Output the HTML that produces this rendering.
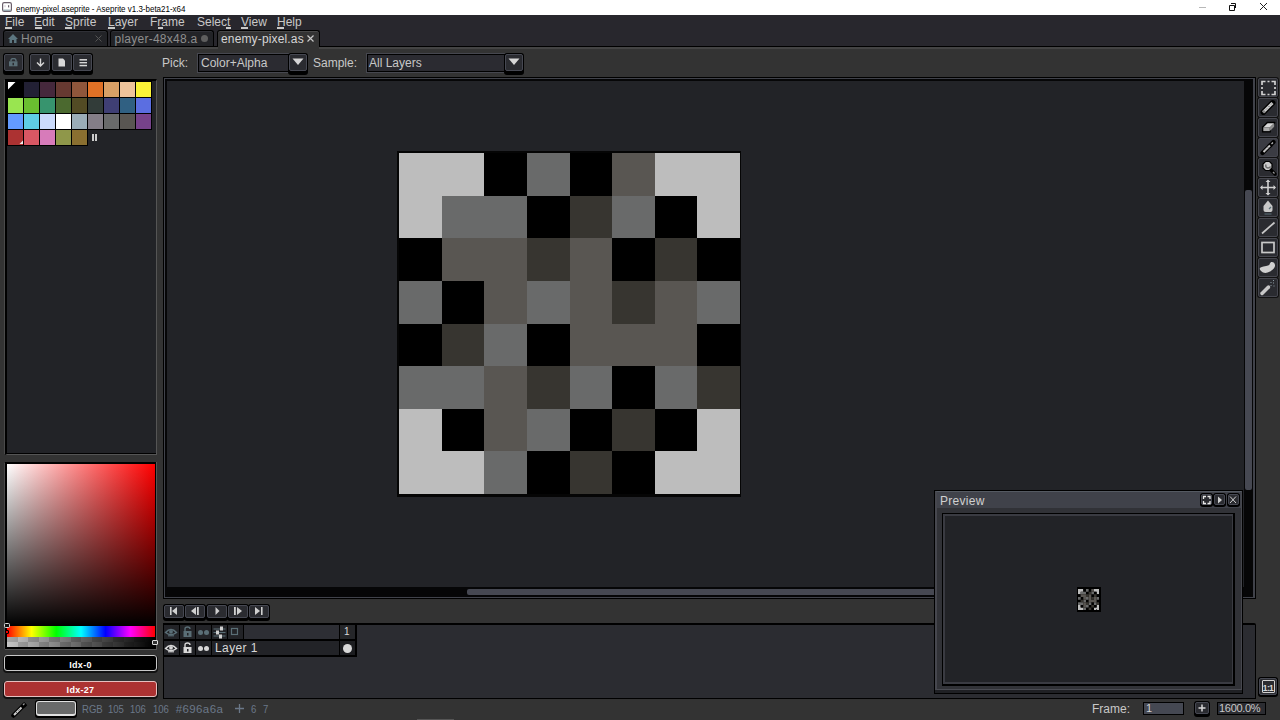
<!DOCTYPE html>
<html><head><meta charset="utf-8"><style>
*{margin:0;padding:0;box-sizing:border-box}
html,body{width:1280px;height:720px;overflow:hidden;background:#333333;font-family:"Liberation Sans",sans-serif;position:relative}
div,span,svg{position:absolute}
.t{white-space:nowrap;font-size:12px;line-height:14px}
.menu{color:#c8c8c8}
.bt{background:#2a2b30;border:1px solid #464852;border-radius:2px;box-shadow:0 0 0 1px #000,0 3px 0 1px #000}
.ic{fill:#d6d6d6}
.ib{fill:#5a6e76}
.sb{color:#6b7889;font-size:11.5px;transform-origin:0 0}

</style></head><body>
<!-- title bar -->
<div style="left:0;top:0;width:1280px;height:15px;background:#fff"></div>
<svg style="left:2px;top:2px" width="10" height="10" viewBox="0 0 10 10"><rect x="0.6" y="0.6" width="8.8" height="8.8" rx="1.6" fill="#fff" stroke="#6b5f6b" stroke-width="1.2"/><rect x="1.2" y="7.6" width="7.6" height="1.2" fill="#8aa0a8"/><rect x="2.4" y="3.2" width="1.2" height="2" fill="#d8d0d8"/><rect x="6" y="3.2" width="1.2" height="2.2" fill="#6b5f6b"/></svg>
<div class="t" style="left:15.5px;top:1.5px;font-size:9.5px;line-height:13px;color:#1a1a1a;transform:scaleX(0.84);transform-origin:0 0;color:#000">enemy-pixel.aseprite - Aseprite v1.3-beta21-x64</div>
<svg style="left:1196px;top:0" width="84" height="15" viewBox="0 0 84 15"><rect x="3" y="7" width="7" height="1" fill="#b8b8b8"/><path d="M33.5 5.5h5v5h-5z" fill="none" stroke="#111" stroke-width="1"/><path d="M35 3.5h4.5v4.5" fill="none" stroke="#111" stroke-width="1"/><path d="M64 3l7 7M71 3l-7 7" stroke="#222" stroke-width="1"/></svg>
<!-- menu + tab bar -->
<div style="left:0;top:15px;width:1280px;height:31px;background:#28272d"></div>
<div class="t menu" style="left:5px;top:15px">File</div><div style="left:5px;top:27px;width:7px;height:1.5px;background:#c8c8c8"></div>
<div class="t menu" style="left:34px;top:15px">Edit</div><div style="left:35px;top:27px;width:7px;height:1.5px;background:#c8c8c8"></div>
<div class="t menu" style="left:65px;top:15px">Sprite</div><div style="left:65px;top:27px;width:7px;height:1.5px;background:#c8c8c8"></div>
<div class="t menu" style="left:108px;top:15px">Layer</div><div style="left:108px;top:27px;width:7px;height:1.5px;background:#c8c8c8"></div>
<div class="t menu" style="left:150px;top:15px">Frame</div><div style="left:158px;top:27px;width:5px;height:1.5px;background:#c8c8c8"></div>
<div class="t menu" style="left:197px;top:15px">Select</div><div style="left:226px;top:27px;width:5px;height:1.5px;background:#c8c8c8"></div>
<div class="t menu" style="left:241px;top:15px">View</div><div style="left:241px;top:27px;width:7px;height:1.5px;background:#c8c8c8"></div>
<div class="t menu" style="left:277px;top:15px">Help</div><div style="left:277px;top:27px;width:7px;height:1.5px;background:#c8c8c8"></div>
<!-- tabs -->
<div style="left:3px;top:30px;width:105px;height:17px;background:#222327;border:1px solid #000;border-bottom:none;border-radius:3px 3px 0 0;box-shadow:inset 0 1px 0 #2f3036"></div>
<svg style="left:8px;top:34px" width="10" height="9" viewBox="0 0 10 9"><path d="M5 0L0 5h1.5v4h2.5v-3h2v3h2.5v-4h1.5z" fill="#5c7680"/></svg>
<div class="t" style="left:21px;top:32px;color:#8e8e8e">Home</div>
<svg style="left:95px;top:35px" width="7" height="7" viewBox="0 0 7 7"><path d="M0.5 0.5l6 6M6.5 0.5l-6 6" stroke="#555" stroke-width="1"/></svg>
<div style="left:110px;top:30px;width:104px;height:17px;background:#222327;border:1px solid #000;border-bottom:none;border-radius:3px 3px 0 0;box-shadow:inset 0 1px 0 #2f3036"></div>
<div class="t" style="left:114.5px;top:32px;color:#8e8e8e;letter-spacing:0.25px">player-48x48.a</div>
<div style="left:201px;top:35px;width:7px;height:7px;border-radius:50%;background:#5e5e5e"></div>
<div style="left:217px;top:30px;width:103px;height:18px;background:#333;border:1px solid #000;border-bottom:none;border-radius:3px 3px 0 0;box-shadow:inset 0 1px 0 #484848"></div>
<div class="t" style="left:221px;top:32px;color:#d6d6d6;letter-spacing:0.15px">enemy-pixel.as</div>
<svg style="left:307px;top:35px" width="7" height="7" viewBox="0 0 7 7"><path d="M0.5 0.5l6 6M6.5 0.5l-6 6" stroke="#c8c8c8" stroke-width="1.2"/></svg>
<div style="left:0;top:46px;width:218px;height:1px;background:#000"></div>
<div style="left:319px;top:46px;width:961px;height:1px;background:#000"></div>
<!-- toolbar -->
<div style="left:0;top:47px;width:1280px;height:30px;background:#333"></div>
<div style="left:0;top:47px;width:218px;height:1.5px;background:#444"></div>
<div style="left:319px;top:47px;width:961px;height:1.5px;background:#444"></div>
<div class="bt" style="left:4px;top:54px;width:19px;height:17px"></div>
<svg style="left:9px;top:58px" width="9" height="9" viewBox="0 0 9 9"><path d="M2 3.5V2.5Q2 0.5 4.5 0.5T7 2.5V3.5" fill="none" stroke="#5a6e76" stroke-width="1.4"/><rect x="0" y="3.3" width="8.5" height="5" fill="#5a6e76"/><rect x="3.5" y="4.8" width="1.5" height="2.5" fill="#2a2b30"/></svg>
<div class="bt" style="left:30px;top:54px;width:20px;height:17px"></div>
<div class="bt" style="left:52px;top:54px;width:20px;height:17px"></div>
<div class="bt" style="left:73px;top:54px;width:19px;height:17px"></div>
<svg style="left:36px;top:58px" width="9" height="9" viewBox="0 0 9 9"><path d="M4.5 0.5v7.5M1 4.5l3.5 3.5 3.5-3.5" fill="none" stroke="#d6d6d6" stroke-width="1.4"/></svg>
<svg style="left:58px;top:58px" width="8" height="9" viewBox="0 0 8 9"><path d="M0.5 0.5h4.5l2 2v6h-6.5z" fill="#d8d8d8"/></svg>
<svg style="left:79px;top:58px" width="9" height="9" viewBox="0 0 9 9"><rect x="0.5" y="1" width="7.5" height="1.6" fill="#cfcfcf"/><rect x="0.5" y="4" width="7.5" height="1.4" fill="#d8d8d8"/><rect x="0.5" y="6.8" width="7.5" height="1.5" fill="#d8d8d8"/></svg>
<div class="t" style="left:162px;top:56px;color:#c8c8c8">Pick:</div>
<div style="left:198px;top:54px;width:91px;height:18px;background:#2b2b31;border:1px solid #000;box-shadow:0 0 0 1px #46474f"></div>
<div class="t" style="left:201px;top:56px;color:#c8c8c8">Color+Alpha</div>
<div class="bt" style="left:289px;top:54px;width:18px;height:17px"></div>
<svg style="left:292px;top:58px" width="12" height="8" viewBox="0 0 12 8"><path d="M0.5 0.5h11l-5.5 6.5z" fill="#d6d6d6"/></svg>
<div class="t" style="left:313px;top:56px;color:#c8c8c8">Sample:</div>
<div style="left:367px;top:54px;width:138px;height:18px;background:#2b2b31;border:1px solid #000;box-shadow:0 0 0 1px #46474f"></div>
<div class="t" style="left:369px;top:56px;color:#c8c8c8">All Layers</div>
<div class="bt" style="left:505px;top:54px;width:18px;height:17px"></div>
<svg style="left:508px;top:58px" width="12" height="8" viewBox="0 0 12 8"><path d="M0.5 0.5h11l-5.5 6.5z" fill="#d6d6d6"/></svg>
<!-- left palette panel -->
<div style="left:4px;top:80px;width:1px;height:374px;background:#4a4a4a"></div>
<div style="left:4px;top:463px;width:1px;height:186px;background:#4a4a4a"></div>
<div style="left:5px;top:79px;width:152px;height:376px;background:#222327;border-top:2px solid #000;border-left:2px solid #000;border-right:1px solid #555;border-bottom:1px solid #555;box-shadow:inset 0 -1px 0 #000"></div>
<div style="left:7px;top:81px;width:145px;height:49px;background:#000"></div>
<div style="left:7px;top:129px;width:81px;height:17px;background:#000"></div>
<div style="left:8px;top:82px;width:15px;height:15px;background:#000000"></div>
<div style="left:24px;top:82px;width:15px;height:15px;background:#222034"></div>
<div style="left:40px;top:82px;width:15px;height:15px;background:#45283c"></div>
<div style="left:56px;top:82px;width:15px;height:15px;background:#663931"></div>
<div style="left:72px;top:82px;width:15px;height:15px;background:#8f563b"></div>
<div style="left:88px;top:82px;width:15px;height:15px;background:#df7126"></div>
<div style="left:104px;top:82px;width:15px;height:15px;background:#d9a066"></div>
<div style="left:120px;top:82px;width:15px;height:15px;background:#eec39a"></div>
<div style="left:136px;top:82px;width:15px;height:15px;background:#fbf236"></div>
<div style="left:8px;top:98px;width:15px;height:15px;background:#99e550"></div>
<div style="left:24px;top:98px;width:15px;height:15px;background:#6abe30"></div>
<div style="left:40px;top:98px;width:15px;height:15px;background:#37946e"></div>
<div style="left:56px;top:98px;width:15px;height:15px;background:#4b692f"></div>
<div style="left:72px;top:98px;width:15px;height:15px;background:#524b24"></div>
<div style="left:88px;top:98px;width:15px;height:15px;background:#323c39"></div>
<div style="left:104px;top:98px;width:15px;height:15px;background:#3f3f74"></div>
<div style="left:120px;top:98px;width:15px;height:15px;background:#306082"></div>
<div style="left:136px;top:98px;width:15px;height:15px;background:#5b6ee1"></div>
<div style="left:8px;top:114px;width:15px;height:15px;background:#639bff"></div>
<div style="left:24px;top:114px;width:15px;height:15px;background:#5fcde4"></div>
<div style="left:40px;top:114px;width:15px;height:15px;background:#cbdbfc"></div>
<div style="left:56px;top:114px;width:15px;height:15px;background:#ffffff"></div>
<div style="left:72px;top:114px;width:15px;height:15px;background:#9badb7"></div>
<div style="left:88px;top:114px;width:15px;height:15px;background:#847e87"></div>
<div style="left:104px;top:114px;width:15px;height:15px;background:#696a6a"></div>
<div style="left:120px;top:114px;width:15px;height:15px;background:#595652"></div>
<div style="left:136px;top:114px;width:15px;height:15px;background:#76428a"></div>
<div style="left:8px;top:130px;width:15px;height:15px;background:#ac3232"></div>
<div style="left:24px;top:130px;width:15px;height:15px;background:#d95763"></div>
<div style="left:40px;top:130px;width:15px;height:15px;background:#d77bba"></div>
<div style="left:56px;top:130px;width:15px;height:15px;background:#8f974a"></div>
<div style="left:72px;top:130px;width:15px;height:15px;background:#8a6f30"></div>
<svg style="left:8px;top:82px" width="8" height="8" viewBox="0 0 8 8"><path d="M0 0h7.5L0 7.5z" fill="#fff"/></svg>
<svg style="left:19px;top:140px" width="5" height="5" viewBox="0 0 5 5"><path d="M4 0.5V4H0.5z" fill="#eee"/></svg>
<div style="left:92px;top:134px;width:1.5px;height:7px;background:#ccc"></div>
<div style="left:95px;top:134px;width:1.5px;height:7px;background:#ccc"></div>
<!-- color gradient -->
<div style="left:5px;top:462px;width:152px;height:188px;background:#000;border-right:1px solid #555;border-bottom:1px solid #555"></div>
<div style="left:7px;top:464px;width:148px;height:162px;background:linear-gradient(to bottom, rgba(0,0,0,0), #000), linear-gradient(to right, #fff, #f00)"></div>
<div style="left:7px;top:626px;width:148px;height:11px;background:linear-gradient(to right,#f00,#ff0 16.6%,#0f0 33.3%,#0ff 50%,#00f 66.6%,#f0f 83.3%,#f00)"></div>
<div style="left:7px;top:637px;width:148px;height:10px;background:linear-gradient(to right,rgba(0,0,0,0),#000),repeating-linear-gradient(to right,#c6c6c6 0 10.6px,#a8a8a8 10.6px 21.2px)"></div>
<div style="left:7px;top:637px;width:148px;height:5px;background:linear-gradient(to right,rgba(0,0,0,0),#000),repeating-linear-gradient(to right,#a8a8a8 0 10.6px,#c6c6c6 10.6px 21.2px)"></div>
<div style="left:4px;top:623px;width:5.5px;height:5px;border:1px solid #ddd;background:#111;border-radius:1.5px"></div>
<div style="left:5px;top:629.5px;width:4px;height:4px;border:1px solid #000;background:#e00;border-radius:1px"></div>
<div style="left:152px;top:640px;width:6px;height:5px;border:1px solid #ddd;background:#333;border-radius:1px"></div>
<div style="left:4px;top:655px;width:153px;height:16px;background:#000;border:1.6px solid #c8c8c8;border-radius:3px;box-shadow:0 1px 0 1px #111"></div>
<div class="t" style="left:4px;top:657.5px;width:153px;text-align:center;color:#fff;font-size:9px;font-weight:bold;letter-spacing:0.3px">Idx-0</div>
<div style="left:4px;top:681px;width:153px;height:16px;background:#ac3232;border:1.6px solid #e6c0c0;border-radius:3px;box-shadow:0 1px 0 1px #111"></div>
<div class="t" style="left:4px;top:682.5px;width:153px;text-align:center;color:#fff;font-size:9px;font-weight:bold;letter-spacing:0.3px">Idx-27</div>
<!-- canvas -->
<div style="left:163px;top:77px;width:1093px;height:522px;background:#000"></div>
<div style="left:164px;top:78px;width:1091px;height:520px;background:#40424a"></div>
<div style="left:165px;top:79px;width:1088px;height:518px;background:#060607"></div>
<div style="left:167px;top:81px;width:1077px;height:506px;background:#222327"></div>
<div style="left:1245px;top:190px;width:7px;height:300px;background:#464852;border-radius:2px"></div>
<div style="left:467px;top:589px;width:470px;height:6px;background:#464852;border-radius:2px"></div>
<div style="left:397px;top:151px;width:344px;height:346px;background:#050505"></div>
<svg style="left:399px;top:153px" width="341.000" height="341.000" viewBox="0 0 8 8" shape-rendering="crispEdges"><path d="M0 0h1v1h-1zM1 0h1v1h-1zM6 0h1v1h-1zM7 0h1v1h-1zM0 1h1v1h-1zM7 1h1v1h-1zM0 6h1v1h-1zM7 6h1v1h-1zM0 7h1v1h-1zM1 7h1v1h-1zM6 7h1v1h-1zM7 7h1v1h-1z" fill="#bdbdbd"/><path d="M2 0h1v1h-1zM4 0h1v1h-1zM3 1h1v1h-1zM6 1h1v1h-1zM0 2h1v1h-1zM5 2h1v1h-1zM7 2h1v1h-1zM1 3h1v1h-1zM0 4h1v1h-1zM3 4h1v1h-1zM7 4h1v1h-1zM5 5h1v1h-1zM1 6h1v1h-1zM4 6h1v1h-1zM6 6h1v1h-1zM3 7h1v1h-1zM5 7h1v1h-1z" fill="#000000"/><path d="M3 0h1v1h-1zM1 1h1v1h-1zM2 1h1v1h-1zM5 1h1v1h-1zM0 3h1v1h-1zM3 3h1v1h-1zM7 3h1v1h-1zM2 4h1v1h-1zM0 5h1v1h-1zM1 5h1v1h-1zM4 5h1v1h-1zM6 5h1v1h-1zM3 6h1v1h-1zM2 7h1v1h-1z" fill="#696a6a"/><path d="M5 0h1v1h-1zM1 2h1v1h-1zM2 2h1v1h-1zM4 2h1v1h-1zM2 3h1v1h-1zM4 3h1v1h-1zM6 3h1v1h-1zM4 4h1v1h-1zM5 4h1v1h-1zM6 4h1v1h-1zM2 5h1v1h-1zM2 6h1v1h-1z" fill="#595652"/><path d="M4 1h1v1h-1zM3 2h1v1h-1zM6 2h1v1h-1zM5 3h1v1h-1zM1 4h1v1h-1zM3 5h1v1h-1zM7 5h1v1h-1zM5 6h1v1h-1zM4 7h1v1h-1z" fill="#373530"/></svg>
<!-- right tools -->
<div style="left:1258px;top:78px;width:20px;height:19px;background:#2a2b30;border:1px solid #45464e;border-radius:2px;box-shadow:0 0 0 1px #111"></div>
<svg style="left:1258px;top:78px" width="20" height="19" viewBox="0 0 19 19"><path d="M7 3.5H3.5V7M3.5 9v2M3.5 13v3.5H7M9 16.5h2M13 16.5h3.5V13M16.5 11V9M16.5 7V3.5H13M11 3.5H9" fill="none" stroke="#d0d0d0" stroke-width="1.7"/></svg>
<div style="left:1258px;top:98px;width:20px;height:19px;background:#2a2b30;border:1px solid #45464e;border-radius:2px;box-shadow:0 0 0 1px #111"></div>
<svg style="left:1258px;top:98px" width="20" height="19" viewBox="0 0 19 19"><path d="M4.8 14.2L14.2 4.8" stroke="#000" stroke-width="5.5" stroke-linecap="round"/><path d="M5 14L14 5" stroke="#cdcdcd" stroke-width="3"/><path d="M7.5 11.5l1-1M10 9l1-1M12.5 6.5l1-1" stroke="#6a6a6a" stroke-width="1"/><path d="M4.5 14.5l1.8-1.8" stroke="#8a8a8a" stroke-width="3"/></svg>
<div style="left:1258px;top:118px;width:20px;height:19px;background:#2a2b30;border:1px solid #45464e;border-radius:2px;box-shadow:0 0 0 1px #111"></div>
<svg style="left:1258px;top:118px" width="20" height="19" viewBox="0 0 19 19"><path d="M4.2 9.2l4.6-4.6h7.4l-4.6 4.6z" fill="#000" stroke="#000" stroke-width="1.5" stroke-linejoin="round"/><path d="M4.2 9.2h7.4v4.6h-7.4z" fill="#000" stroke="#000" stroke-width="1.5"/><path d="M4.8 9.5l4.3-4.3h6.5l-4.3 4.3z" fill="#d8d8d8"/><path d="M4.8 9.5h6.5v3.6h-6.5z" fill="#a9a9a9"/><path d="M11.3 9.5l4.3-4.3v3.5l-4.3 4.4z" fill="#8c8c8c"/></svg>
<div style="left:1258px;top:138px;width:20px;height:19px;background:#3b3c43;border:1px solid #45464e;border-radius:2px;box-shadow:0 0 0 1px #111"></div>
<svg style="left:1258px;top:138px" width="20" height="19" viewBox="0 0 19 19"><path d="M4 15L15 4" stroke="#000" stroke-width="4.2" stroke-linecap="round"/><path d="M10 6l3 3" stroke="#000" stroke-width="3"/><path d="M5 14L11.5 7.5" stroke="#c8c8c8" stroke-width="2"/><path d="M6.5 12.5l1-1M9 10l1-1" stroke="#777" stroke-width="0.9"/><path d="M13 6l1.5-1.5" stroke="#bbb" stroke-width="1.3"/></svg>
<div style="left:1258px;top:158px;width:20px;height:19px;background:#2a2b30;border:1px solid #45464e;border-radius:2px;box-shadow:0 0 0 1px #111"></div>
<svg style="left:1258px;top:158px" width="20" height="19" viewBox="0 0 19 19"><path d="M13 12.5l3.5 3.5" stroke="#000" stroke-width="3.2" stroke-linecap="round"/><path d="M14.5 14l1.5 1.5" stroke="#999" stroke-width="1.3"/><path d="M7 3.5h4l2.5 2.5v4l-2.5 2.5h-4l-2.5-2.5v-4z" fill="#ccc" stroke="#000" stroke-width="1.2"/><path d="M7.5 6.5q-1 3 2 3.5 2 0 2.5-1.5" fill="none" stroke="#6e6e6e" stroke-width="1.5"/></svg>
<div style="left:1258px;top:178px;width:20px;height:19px;background:#2a2b30;border:1px solid #45464e;border-radius:2px;box-shadow:0 0 0 1px #111"></div>
<svg style="left:1258px;top:178px" width="20" height="19" viewBox="0 0 19 19"><path d="M9.5 2.5v14M2.5 9.5h14" stroke="#d0d0d0" stroke-width="1.6"/><path d="M9.5 1.5l-2.5 2.5h5zM9.5 17.5l-2.5-2.5h5zM1.5 9.5l2.5-2.5v5zM17.5 9.5l-2.5-2.5v5z" fill="#d0d0d0"/></svg>
<div style="left:1258px;top:198px;width:20px;height:19px;background:#2a2b30;border:1px solid #45464e;border-radius:2px;box-shadow:0 0 0 1px #111"></div>
<svg style="left:1258px;top:198px" width="20" height="19" viewBox="0 0 19 19"><path d="M9.5 2.5l-4.5 5.5v4q0 2 2 2h5q2 0 2-2v-4z" fill="#c8c8c8"/><path d="M10.5 11l2-2" stroke="#5a7078" stroke-width="1.2"/><path d="M6 16h7" stroke="#5a7078" stroke-width="1"/></svg>
<div style="left:1258px;top:218px;width:20px;height:19px;background:#2a2b30;border:1px solid #45464e;border-radius:2px;box-shadow:0 0 0 1px #111"></div>
<svg style="left:1258px;top:218px" width="20" height="19" viewBox="0 0 19 19"><path d="M3.5 15.5L16 4.5" stroke="#c8c8c8" stroke-width="1.7"/></svg>
<div style="left:1258px;top:238px;width:20px;height:19px;background:#2a2b30;border:1px solid #45464e;border-radius:2px;box-shadow:0 0 0 1px #111"></div>
<svg style="left:1258px;top:238px" width="20" height="19" viewBox="0 0 19 19"><rect x="3.5" y="4.5" width="12" height="10" fill="none" stroke="#c8c8c8" stroke-width="1.7"/></svg>
<div style="left:1258px;top:258px;width:20px;height:19px;background:#2a2b30;border:1px solid #45464e;border-radius:2px;box-shadow:0 0 0 1px #111"></div>
<svg style="left:1258px;top:258px" width="20" height="19" viewBox="0 0 19 19"><path d="M12.5 4q3.5-0.5 4 3t-5 6.5-9-0.5 2.5-4.5 6-2 1.5-2.5z" fill="#d0d0d0"/></svg>
<div style="left:1258px;top:278px;width:20px;height:19px;background:#2a2b30;border:1px solid #45464e;border-radius:2px;box-shadow:0 0 0 1px #111"></div>
<svg style="left:1258px;top:278px" width="20" height="19" viewBox="0 0 19 19"><path d="M3.5 15.5L10 9" stroke="#c8c8c8" stroke-width="3.5" stroke-linecap="round"/><path d="M12 7.5h1M14.5 5h1M12 4.5h1M15 8h1M14.5 2.5h1" stroke="#8a9aa0" stroke-width="1"/></svg>
<!-- timeline -->
<div style="left:163px;top:623px;width:1093px;height:76px;background:#2b2c31;border-top:2px solid #000;border-bottom:1px solid #000;border-right:1px solid #000;border-left:1px solid #000;border-radius:0 2px 0 0"></div>
<div class="bt" style="left:164px;top:605px;width:20px;height:13px;box-shadow:0 0 0 1px #000,0 2px 0 1px #000"></div>
<svg style="left:164px;top:603px" width="20" height="16" viewBox="0 0 20 16"><rect x="6" y="4" width="1.6" height="8" fill="#d0d0d0"/><path d="M13 4v8l-5-4z" fill="#d0d0d0"/></svg>
<div class="bt" style="left:185px;top:605px;width:20px;height:13px;box-shadow:0 0 0 1px #000,0 2px 0 1px #000"></div>
<svg style="left:185px;top:603px" width="20" height="16" viewBox="0 0 20 16"><path d="M11 4v8l-5-4z" fill="#d0d0d0"/><rect x="12" y="4" width="1.8" height="8" fill="#d0d0d0"/></svg>
<div class="bt" style="left:207px;top:605px;width:20px;height:13px;box-shadow:0 0 0 1px #000,0 2px 0 1px #000"></div>
<svg style="left:207px;top:603px" width="20" height="16" viewBox="0 0 20 16"><path d="M8.5 4v8l4-4z" fill="#d0d0d0"/></svg>
<div class="bt" style="left:228px;top:605px;width:20px;height:13px;box-shadow:0 0 0 1px #000,0 2px 0 1px #000"></div>
<svg style="left:228px;top:603px" width="20" height="16" viewBox="0 0 20 16"><rect x="6" y="4" width="1.8" height="8" fill="#d0d0d0"/><path d="M9 4v8l5-4z" fill="#d0d0d0"/></svg>
<div class="bt" style="left:249px;top:605px;width:20px;height:13px;box-shadow:0 0 0 1px #000,0 2px 0 1px #000"></div>
<svg style="left:249px;top:603px" width="20" height="16" viewBox="0 0 20 16"><path d="M6 4v8l5-4z" fill="#d0d0d0"/><rect x="12" y="4" width="1.6" height="8" fill="#d0d0d0"/></svg>
<div style="left:163px;top:623px;width:194px;height:34px;background:#000"></div>
<div style="left:164px;top:625px;width:15px;height:14px;background:#222327"></div>
<div style="left:180px;top:625px;width:15px;height:14px;background:#222327"></div>
<div style="left:196px;top:625px;width:15px;height:14px;background:#222327"></div>
<div style="left:212px;top:625px;width:15px;height:14px;background:#222327"></div>
<div style="left:228px;top:625px;width:15px;height:14px;background:#222327"></div>
<div style="left:244px;top:625px;width:95px;height:14px;background:#2d2e34"></div>
<div style="left:340px;top:625px;width:15px;height:14px;background:#252629"></div>
<div style="left:164px;top:641px;width:15px;height:14px;background:#222327"></div>
<div style="left:180px;top:641px;width:15px;height:14px;background:#222327"></div>
<div style="left:196px;top:641px;width:15px;height:14px;background:#222327"></div>
<div style="left:212px;top:641px;width:127px;height:14px;background:#222327"></div>
<div style="left:340px;top:641px;width:15px;height:14px;background:#1c1d20"></div>
<div class="t" style="left:344px;top:625px;color:#d8d8d8;font-size:10px">1</div>
<div style="left:343px;top:643.5px;width:9px;height:9px;border-radius:50%;background:#d8d8d8"></div>
<div class="t" style="left:215px;top:641px;color:#d8d8d8;letter-spacing:0.4px">Layer 1</div>
<svg style="left:164px;top:625px" width="15" height="14" viewBox="0 0 15 14"><path d="M1.5 7.5q5.5-6 11 0q-5.5 4.5-11 0z" fill="none" stroke="#5a6e76" stroke-width="1.4"/><circle cx="7" cy="6.8" r="1.9" fill="#5a6e76"/><path d="M4 10.8h6" stroke="#5a6e76" stroke-width="1.1"/></svg>
<svg style="left:180px;top:625px" width="15" height="14" viewBox="0 0 15 14"><path d="M5 6V4q0-2 2.5-2t2.5 2" fill="none" stroke="#5a6e76" stroke-width="1.4"/><rect x="3.5" y="6" width="8" height="6" fill="#5a6e76"/><rect x="7" y="8" width="1.5" height="2.5" fill="#222327"/></svg>
<svg style="left:196px;top:625px" width="15" height="14" viewBox="0 0 15 14"><circle cx="4.5" cy="7.5" r="2.5" fill="#5a6e76"/><circle cx="10.5" cy="7.5" r="2.5" fill="#5a6e76"/></svg>
<svg style="left:212px;top:625px" width="15" height="14" viewBox="0 0 15 14"><path d="M1.5 4h12M1.5 7.5h12M1.5 11h12" stroke="#5a6e76" stroke-width="1.2"/><rect x="8" y="1.5" width="3" height="4" fill="#d0d0d0"/><rect x="4" y="5.5" width="3" height="4" fill="#d0d0d0"/><rect x="7" y="9.5" width="3" height="4" fill="#d0d0d0"/></svg>
<svg style="left:228px;top:625px" width="15" height="14" viewBox="0 0 15 14"><rect x="3.5" y="3.5" width="6" height="6" fill="none" stroke="#5a6e76" stroke-width="1.2"/><path d="M10.5 5v6h-6" fill="none" stroke="#26272b" stroke-width="1"/></svg>
<svg style="left:164px;top:641px" width="15" height="14" viewBox="0 0 15 14"><path d="M1.5 7.5q5.5-6 11 0q-5.5 4.5-11 0z" fill="none" stroke="#d8d8d8" stroke-width="1.4"/><circle cx="7" cy="6.8" r="1.9" fill="#d8d8d8"/><path d="M4 10.8h6" stroke="#d8d8d8" stroke-width="1.1"/></svg>
<svg style="left:180px;top:641px" width="15" height="14" viewBox="0 0 15 14"><path d="M5 6V4q0-2 2.5-2t2.5 2" fill="none" stroke="#d8d8d8" stroke-width="1.4"/><rect x="3.5" y="6" width="8" height="6" fill="#d8d8d8"/><rect x="7" y="8" width="1.5" height="2.5" fill="#222327"/></svg>
<svg style="left:196px;top:641px" width="15" height="14" viewBox="0 0 15 14"><circle cx="4.5" cy="7.5" r="2.5" fill="#d8d8d8"/><circle cx="10.5" cy="7.5" r="2.5" fill="#d8d8d8"/></svg>
<!-- preview -->
<div style="left:934px;top:490px;width:309px;height:204px;background:#000"></div>
<div style="left:935px;top:491px;width:307px;height:199px;background:#313237;border-left:2px solid #46474e;border-right:1px solid #46474e;border-top:1px solid #555a62;border-bottom:1px solid #4a4b52"></div>
<div style="left:935px;top:690px;width:307px;height:3px;background:#1f2024"></div>
<div style="left:937px;top:492px;width:304px;height:16px;background:#40424a"></div>
<div class="t" style="left:940px;top:494px;color:#d0d0d0;letter-spacing:0.3px">Preview</div>
<div class="bt" style="left:1201px;top:494px;width:11px;height:11px;box-shadow:0 0 0 1px #000,0 1px 0 1px #000"></div>
<div class="bt" style="left:1214px;top:494px;width:11px;height:11px;box-shadow:0 0 0 1px #000,0 1px 0 1px #000"></div>
<div class="bt" style="left:1228px;top:494px;width:11px;height:11px;box-shadow:0 0 0 1px #000,0 1px 0 1px #000"></div>
<svg style="left:1201px;top:494px" width="38" height="12" viewBox="0 0 38 12"><path d="M2.5 5V2.5H5M6.5 2.5H9V5M9 7v2.5H6.5M5 9.5H2.5V7" fill="none" stroke="#e8e8e8" stroke-width="1.3"/><path d="M17 2.5l4 3.5-4 3.5z" fill="#d0d0d0"/><path d="M29 2.5l6 6.5M35 2.5l-6 6.5" stroke="#cfcfcf" stroke-width="1"/></svg>
<div style="left:942px;top:513px;width:293px;height:173px;background:#000"></div>
<div style="left:943px;top:514px;width:290px;height:170px;background:#3a3b42"></div>
<div style="left:945px;top:516px;width:287px;height:166px;background:#222327"></div>
<div style="left:1077px;top:587px;width:24px;height:25px;background:#000"></div>
<svg style="left:1078px;top:588.5px" width="21.280" height="21.280" viewBox="0 0 8 8"><path d="M0 0h1v1h-1zM1 0h1v1h-1zM6 0h1v1h-1zM7 0h1v1h-1zM0 1h1v1h-1zM7 1h1v1h-1zM0 6h1v1h-1zM7 6h1v1h-1zM0 7h1v1h-1zM1 7h1v1h-1zM6 7h1v1h-1zM7 7h1v1h-1z" fill="#bdbdbd"/><path d="M2 0h1v1h-1zM4 0h1v1h-1zM3 1h1v1h-1zM6 1h1v1h-1zM0 2h1v1h-1zM5 2h1v1h-1zM7 2h1v1h-1zM1 3h1v1h-1zM0 4h1v1h-1zM3 4h1v1h-1zM7 4h1v1h-1zM5 5h1v1h-1zM1 6h1v1h-1zM4 6h1v1h-1zM6 6h1v1h-1zM3 7h1v1h-1zM5 7h1v1h-1z" fill="#000000"/><path d="M3 0h1v1h-1zM1 1h1v1h-1zM2 1h1v1h-1zM5 1h1v1h-1zM0 3h1v1h-1zM3 3h1v1h-1zM7 3h1v1h-1zM2 4h1v1h-1zM0 5h1v1h-1zM1 5h1v1h-1zM4 5h1v1h-1zM6 5h1v1h-1zM3 6h1v1h-1zM2 7h1v1h-1z" fill="#696a6a"/><path d="M5 0h1v1h-1zM1 2h1v1h-1zM2 2h1v1h-1zM4 2h1v1h-1zM2 3h1v1h-1zM4 3h1v1h-1zM6 3h1v1h-1zM4 4h1v1h-1zM5 4h1v1h-1zM6 4h1v1h-1zM2 5h1v1h-1zM2 6h1v1h-1z" fill="#595652"/><path d="M4 1h1v1h-1zM3 2h1v1h-1zM6 2h1v1h-1zM5 3h1v1h-1zM1 4h1v1h-1zM3 5h1v1h-1zM7 5h1v1h-1zM5 6h1v1h-1zM4 7h1v1h-1z" fill="#373530"/></svg>
<!-- status bar -->
<div style="left:0;top:699px;width:1280px;height:21px;background:#333"></div>
<div style="left:417px;top:719px;width:37px;height:1px;background:#555"></div>
<div style="left:163px;top:698px;width:1093px;height:1px;background:#000"></div>
<svg style="left:11px;top:701px" width="17" height="17" viewBox="0 0 17 17"><path d="M2.5 14.5L13 4" stroke="#000" stroke-width="4.5" stroke-linecap="round"/><path d="M12 2.5l3 3" stroke="#000" stroke-width="3.5"/><path d="M3 14L10.5 6.5" stroke="#cfcfcf" stroke-width="2"/><path d="M5 12l1-1M7.5 9.5l1-1" stroke="#555" stroke-width="1"/><path d="M12 4l1.5-1.5" stroke="#999" stroke-width="1.2"/></svg>
<div style="left:35px;top:700px;width:42px;height:18px;background:#000;border-radius:3px"></div>
<div style="left:36px;top:700.5px;width:40px;height:15.5px;background:#696a6a;border:1.5px solid #e0e0e0;border-bottom-width:2px;border-radius:3px"></div>
<div class="t sb" style="left:82px;top:702px;transform:scaleX(0.83)">RGB</div>
<div class="t sb" style="left:107.7px;top:702px;transform:scaleX(0.83)">105</div>
<div class="t sb" style="left:130.3px;top:702px;transform:scaleX(0.83)">106</div>
<div class="t sb" style="left:153px;top:702px;transform:scaleX(0.83)">106</div>
<div class="t sb" style="left:175.7px;top:702px;letter-spacing:0.4px">#696a6a</div>
<div class="t sb" style="left:250.6px;top:702px;transform:scaleX(0.83)">6</div>
<div class="t sb" style="left:263px;top:702px;transform:scaleX(0.83)">7</div>
<svg style="left:234px;top:703px" width="11" height="11" viewBox="0 0 11 11"><path d="M5.5 1v9M1 5.5h9" stroke="#6b7889" stroke-width="1.3"/></svg>
<div class="t" style="left:1092px;top:702px;color:#c8c8c8">Frame:</div>
<div style="left:1143px;top:702px;width:41px;height:13px;background:#454852;border:1px solid #000"></div>
<div class="t" style="left:1146px;top:701px;color:#d0d0d0;font-size:11px">1</div>
<div class="bt" style="left:1195px;top:702px;width:14px;height:12px;box-shadow:0 0 0 1px #000,0 2px 0 1px #000"></div>
<svg style="left:1197px;top:703px" width="10" height="10" viewBox="0 0 10 10"><path d="M5 1.5v7M1.5 5h7" stroke="#d8d8d8" stroke-width="1.5"/></svg>
<div style="left:1217px;top:702px;width:49px;height:13px;background:#2b2c31;border:1px solid #000"></div>
<div class="t" style="left:1219px;top:701px;color:#c8c8c8;font-size:11px;letter-spacing:-0.3px">1600.0%</div>
<div class="bt" style="left:1259px;top:678px;width:18px;height:17px;box-shadow:0 0 0 1px #000,0 1px 0 1px #000"></div>
<div style="left:1261.5px;top:680px;width:13px;height:12.5px;border:1.5px solid #d0d0d0;border-radius:1px"></div>
<div class="t" style="left:1261.5px;top:681.5px;width:13px;text-align:center;color:#d8d8d8;font-size:8.5px;line-height:12.5px;font-weight:bold;letter-spacing:-0.6px">1:1</div>

</body></html>
